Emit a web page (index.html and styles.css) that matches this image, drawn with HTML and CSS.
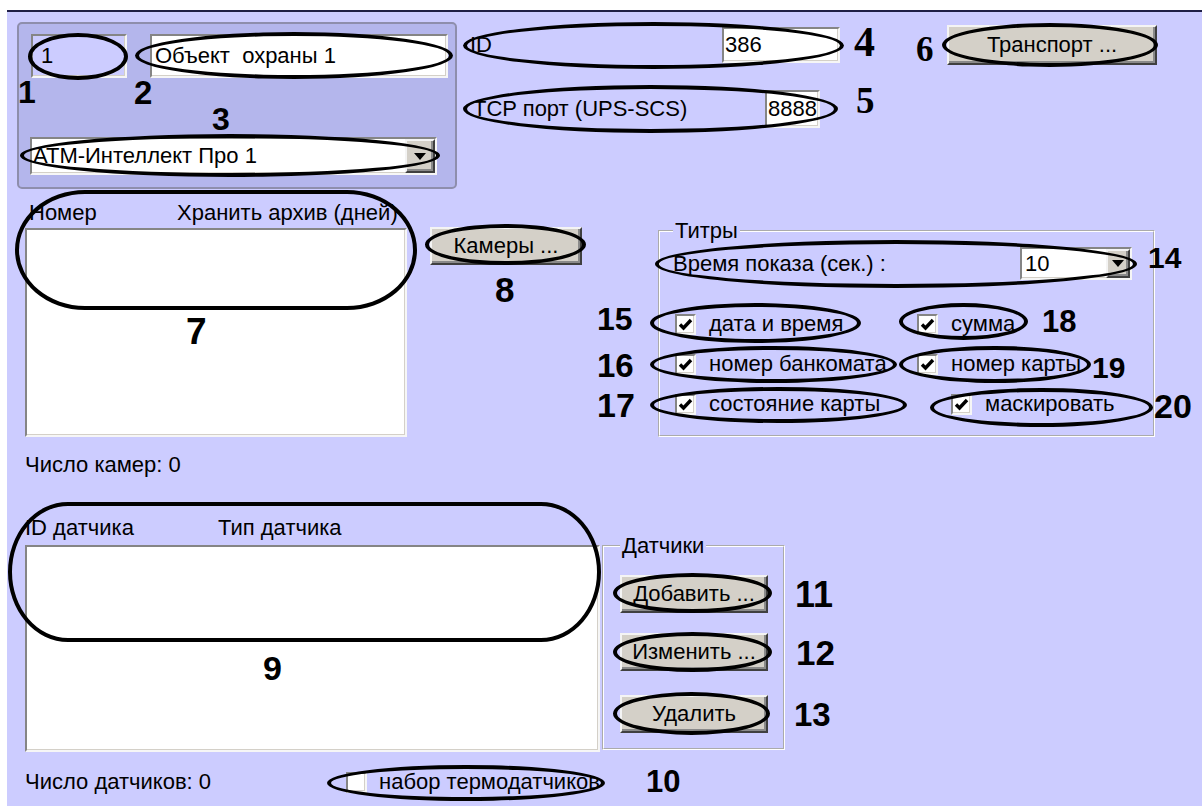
FILE: index.html
```html
<!DOCTYPE html>
<html lang="ru">
<head>
    <meta charset="UTF-8">
    <title>Банкомат - настройки</title>
    <link rel="stylesheet" href="styles.css">
</head>
<body>
    <div class="dlg">
        <!-- верхний ряд: объект, ID / порт, транспорт -->
        <div class="band band-top">
            <div class="grp1">
                <div class="grp1-row">
                    <div class="edit edit-num">1</div>
                    <div class="edit edit-name">Объект&nbsp; охраны 1</div>
                </div>
                <div class="combo combo-type">
                    <span class="combo-text">АТМ-Интеллект Про 1</span>
                    <span class="combo-btn"><i class="tri"></i></span>
                </div>
            </div>

            <div class="idcol">
                <div class="lf lf-id">
                    <span class="lf-label">ID</span>
                    <span class="edit edit-id">386</span>
                </div>
                <div class="lf lf-tcp">
                    <span class="lf-label">TCP порт (UPS-SCS)</span>
                    <span class="edit edit-port">8888</span>
                </div>
            </div>

            <button class="btn btn-transport">Транспорт ...</button>
        </div>

        <!-- камеры и титры -->
        <div class="band band-mid">
            <div class="cams">
                <div class="list-head head-cams">
                    <span>Номер</span>
                    <span>Хранить архив (дней)</span>
                </div>
                <div class="listbox list-cams"></div>
                <div class="count">Число камер: 0</div>
            </div>

            <button class="btn btn-cams">Камеры ...</button>

            <fieldset class="group titry">
                <legend>Титры</legend>
                <div class="time-row">
                    <span>Время показа (сек.) :</span>
                    <div class="combo combo-time">
                        <span class="combo-text">10</span>
                        <span class="combo-btn"><i class="tri"></i></span>
                    </div>
                </div>
                <div class="checks">
                    <label class="chk"><span class="box"><svg viewBox="0 0 17 17"><polyline points="3,8.5 6.5,12 14,4"/></svg></span>дата и время</label>
                    <label class="chk"><span class="box"><svg viewBox="0 0 17 17"><polyline points="3,8.5 6.5,12 14,4"/></svg></span>сумма</label>
                    <label class="chk"><span class="box"><svg viewBox="0 0 17 17"><polyline points="3,8.5 6.5,12 14,4"/></svg></span>номер банкомата</label>
                    <label class="chk"><span class="box"><svg viewBox="0 0 17 17"><polyline points="3,8.5 6.5,12 14,4"/></svg></span>номер карты</label>
                    <label class="chk"><span class="box"><svg viewBox="0 0 17 17"><polyline points="3,8.5 6.5,12 14,4"/></svg></span>состояние карты</label>
                    <label class="chk chk-mask"><span class="box"><svg viewBox="0 0 17 17"><polyline points="3,8.5 6.5,12 14,4"/></svg></span>маскировать</label>
                </div>
            </fieldset>
        </div>

        <!-- датчики -->
        <div class="band band-bot">
            <div class="sensors">
                <div class="list-head head-sens">
                    <span>ID датчика</span>
                    <span>Тип датчика</span>
                </div>
                <div class="listbox list-sens"></div>
                <div class="sens-foot">
                    <span>Число датчиков: 0</span>
                    <label class="chk"><span class="box"></span>набор термодатчиков</label>
                </div>
            </div>

            <fieldset class="group sens-group">
                <legend>Датчики</legend>
                <button class="btn btn-side">Добавить ...</button>
                <button class="btn btn-side btn-edit">Изменить ...</button>
                <button class="btn btn-side btn-del">Удалить</button>
            </fieldset>
        </div>
    </div>

    <!-- пометки поверх скриншота -->
    <div class="notes">
        <div class="oval o1"></div>
        <div class="oval o2"></div>
        <div class="oval o3"></div>
        <div class="oval o4"></div>
        <div class="oval o5"></div>
        <div class="oval o6"></div>
        <div class="oval o7"></div>
        <div class="oval o8"></div>
        <div class="oval o9"></div>
        <div class="oval o10"></div>
        <div class="oval o11"></div>
        <div class="oval o12"></div>
        <div class="oval o13"></div>
        <div class="oval o14"></div>
        <div class="oval o15"></div>
        <div class="oval o16"></div>
        <div class="oval o17"></div>
        <div class="oval o18"></div>
        <div class="oval o19"></div>
        <div class="oval o20"></div>

        <span class="num n1">1</span>
        <span class="num n2">2</span>
        <span class="num n3">3</span>
        <span class="num num-serif n4">4</span>
        <span class="num num-serif n5">5</span>
        <span class="num num-serif n6">6</span>
        <span class="num n7">7</span>
        <span class="num n8">8</span>
        <span class="num n9">9</span>
        <span class="num n10">10</span>
        <span class="num n11">11</span>
        <span class="num n12">12</span>
        <span class="num n13">13</span>
        <span class="num n14">14</span>
        <span class="num n15">15</span>
        <span class="num n16">16</span>
        <span class="num n17">17</span>
        <span class="num n18">18</span>
        <span class="num n19">19</span>
        <span class="num n20">20</span>
    </div>
</body>
</html>
```

FILE: styles.css
```css
* {
    box-sizing: border-box;
}

body {
    margin: 0;
    width: 1202px;
    height: 806px;
    overflow: hidden;
    position: relative;
    background: #fff;
    font-family: "Liberation Sans", Arial, sans-serif;
    font-size: 22px;
    color: #000;
}

/* окно диалога */
.dlg {
    margin: 10px 0 0 7px;
    height: 796px;
    padding: 10px 0 0 10px;
    border-top: 2px solid #1f1f45;
    background: #ccccff;
}

.band {
    display: flex;
    align-items: flex-start;
}

/* вдавленные и выпуклые рамки */
.edit,
.combo,
.listbox,
.box {
    border: 2px solid;
    border-color: #858585 #f6f6f6 #f6f6f6 #858585;
    box-shadow: inset -1px -1px 0 #d4d0c8;
}

.btn,
.combo-btn {
    background: #d4d0c8;
    border: 2px solid;
    border-color: #f4f4f4 #404040 #404040 #f4f4f4;
    box-shadow: inset -2px -2px 0 #8a8a8a;
}

.btn {
    font: inherit;
    color: #000;
    padding: 0;
    display: block;
}

.edit {
    display: flex;
    align-items: center;
    background: #fff;
    padding-left: 1px;
}

/* группа объекта */
.grp1 {
    width: 440px;
    height: 167px;
    padding: 10px 0 0 12px;
    border: 2px solid #8e8eac;
    border-radius: 5px;
    background: #b4b6ec;
}

.grp1-row {
    display: flex;
    gap: 23px;
}

.edit-num {
    width: 96px;
    height: 44px;
    padding-left: 8px;
    background: #ccccff;
}

.edit-name {
    width: 298px;
    height: 44px;
    padding-left: 3px;
}

.combo {
    display: flex;
    background: #fff;
}

.combo-text {
    flex: 1;
    display: flex;
    align-items: center;
    padding-left: 1px;
}

.combo-btn {
    display: flex;
    align-items: center;
    justify-content: center;
}

.tri {
    width: 0;
    height: 0;
    border-left: 6px solid transparent;
    border-right: 6px solid transparent;
    border-top: 7px solid #000;
}

.combo-type {
    width: 407px;
    height: 38px;
    margin: 59px 0 0 -1px;
}

.combo-type .combo-btn {
    width: 30px;
}

/* ID и порт */
.idcol {
    width: 372px;
    margin: 5px 0 0 11px;
}

.lf {
    display: flex;
    align-items: center;
}

.lf-label {
    flex: 1;
}

.lf-id {
    height: 36px;
}

.lf-id .lf-label {
    padding-left: 2px;
}

.edit-id {
    width: 118px;
    height: 36px;
}

.lf-tcp {
    width: 352px;
    height: 38px;
    margin-top: 27px;
}

.lf-tcp .lf-label {
    padding-left: 5px;
}

.edit-port {
    width: 55px;
    height: 38px;
}

.btn-transport {
    width: 210px;
    height: 40px;
    margin: 3px 0 0 107px;
}

/* камеры */
.cams {
    width: 382px;
    margin: 11px 0 0 8px;
}

.list-head {
    display: grid;
    line-height: 26px;
}

.head-cams {
    grid-template-columns: 148px auto;
    padding-left: 4px;
}

.listbox {
    background: #fff;
}

.list-cams {
    height: 209px;
    margin-top: 2px;
}

.count {
    margin-top: 15px;
    line-height: 26px;
}

.btn-cams {
    width: 152px;
    height: 38px;
    margin: 38px 0 0 23px;
}

/* рамки групп */
.group {
    margin: 0;
    padding: 0;
    min-width: 0;
    border: 2px groove #fff;
}

.group legend {
    padding: 0 2px;
    line-height: 20px;
}

.titry {
    width: 497px;
    height: 216px;
    margin: 32px 0 0 76px;
    padding: 6px 21px 0 13px;
}

.time-row {
    display: flex;
    align-items: center;
    justify-content: space-between;
    height: 33px;
}

.combo-time {
    width: 112px;
    height: 33px;
}

.combo-time .combo-text {
    padding-left: 3px;
}

.combo-time .combo-btn {
    width: 24px;
}

.checks {
    display: grid;
    grid-template-columns: 242px auto;
    grid-auto-rows: 40px;
    margin-top: 24px;
}

.chk {
    display: flex;
    align-items: center;
    gap: 13px;
    padding-left: 2px;
    white-space: nowrap;
}

.chk-mask {
    padding-left: 36px;
}

.box {
    width: 21px;
    height: 21px;
    flex: none;
    display: flex;
    align-items: center;
    justify-content: center;
    background: #fff;
}

.box svg {
    width: 17px;
    height: 17px;
}

.box polyline {
    fill: none;
    stroke: #000;
    stroke-width: 3.4;
}

/* датчики */
.band-bot {
    margin-top: 37px;
}

.sensors {
    width: 575px;
    margin-left: 8px;
}

.head-sens {
    grid-template-columns: 193px auto;
}

.list-sens {
    height: 207px;
    margin-top: 4px;
}

.sens-foot {
    display: grid;
    grid-template-columns: 321px auto;
    align-items: center;
    height: 26px;
    margin-top: 17px;
}

.sens-foot .chk {
    padding-left: 0;
    gap: 12px;
}

.sens-group {
    width: 183px;
    height: 214px;
    margin: 21px 0 0 2px;
    padding: 19px 0 0 16px;
}

.btn-side {
    width: 148px;
    height: 38px;
}

.btn-edit {
    margin-top: 20px;
}

.btn-del {
    margin-top: 24px;
}

/* пометки */
.notes {
    position: absolute;
    left: 0;
    top: 0;
    width: 1202px;
    height: 806px;
    pointer-events: none;
}

.oval {
    position: absolute;
    border: 4px solid #000;
    border-radius: 50%;
}

.o1 { left: 28px; top: 33px; width: 100px; height: 47px; }
.o2 { left: 135px; top: 32px; width: 318px; height: 47px; }
.o3 { left: 20px; top: 134px; width: 420px; height: 43px; }
.o4 { left: 463px; top: 22px; width: 381px; height: 47px; }
.o5 { left: 463px; top: 85px; width: 375px; height: 48px; }
.o6 { left: 942px; top: 23px; width: 216px; height: 44px; }
.o7 { left: 15px; top: 190px; width: 402px; height: 120px; border-radius: 70px / 60px; }
.o8 { left: 425px; top: 224px; width: 161px; height: 41px; }
.o9 { left: 8px; top: 502px; width: 593px; height: 140px; border-radius: 60px / 70px; }
.o10 { left: 327px; top: 765px; width: 278px; height: 36px; }
.o11 { left: 613px; top: 573px; width: 159px; height: 40px; }
.o12 { left: 613px; top: 632px; width: 159px; height: 40px; }
.o13 { left: 613px; top: 692px; width: 157px; height: 43px; }
.o14 { left: 655px; top: 240px; width: 482px; height: 48px; }
.o15 { left: 650px; top: 303px; width: 211px; height: 40px; }
.o16 { left: 650px; top: 346px; width: 247px; height: 37px; }
.o17 { left: 650px; top: 387px; width: 257px; height: 36px; }
.o18 { left: 899px; top: 303px; width: 129px; height: 37px; }
.o19 { left: 899px; top: 346px; width: 192px; height: 37px; }
.o20 { left: 930px; top: 388px; width: 223px; height: 39px; }

.num {
    position: absolute;
    font-weight: bold;
    line-height: 1;
}

.num-serif {
    font-family: "Liberation Serif", "Times New Roman", serif;
}

.n1 { left: 18px; top: 76px; font-size: 32px; }
.n2 { left: 134px; top: 76px; font-size: 33px; }
.n3 { left: 212px; top: 103px; font-size: 32px; }
.n4 { left: 854px; top: 21px; font-size: 42px; }
.n5 { left: 856px; top: 82px; font-size: 37px; }
.n6 { left: 916px; top: 32px; font-size: 35px; }
.n7 { left: 186px; top: 313px; font-size: 37px; }
.n8 { left: 495px; top: 272px; font-size: 35px; }
.n9 { left: 263px; top: 651px; font-size: 34px; }
.n10 { left: 646px; top: 766px; font-size: 31px; }
.n11 { left: 795px; top: 577px; font-size: 36px; }
.n12 { left: 796px; top: 635px; font-size: 35px; }
.n13 { left: 794px; top: 698px; font-size: 33px; }
.n14 { left: 1148px; top: 243px; font-size: 30px; }
.n15 { left: 597px; top: 303px; font-size: 32px; }
.n16 { left: 597px; top: 349px; font-size: 33px; }
.n17 { left: 597px; top: 388px; font-size: 34px; }
.n18 { left: 1042px; top: 306px; font-size: 31px; }
.n19 { left: 1092px; top: 353px; font-size: 30px; }
.n20 { left: 1154px; top: 389px; font-size: 34px; }
```
